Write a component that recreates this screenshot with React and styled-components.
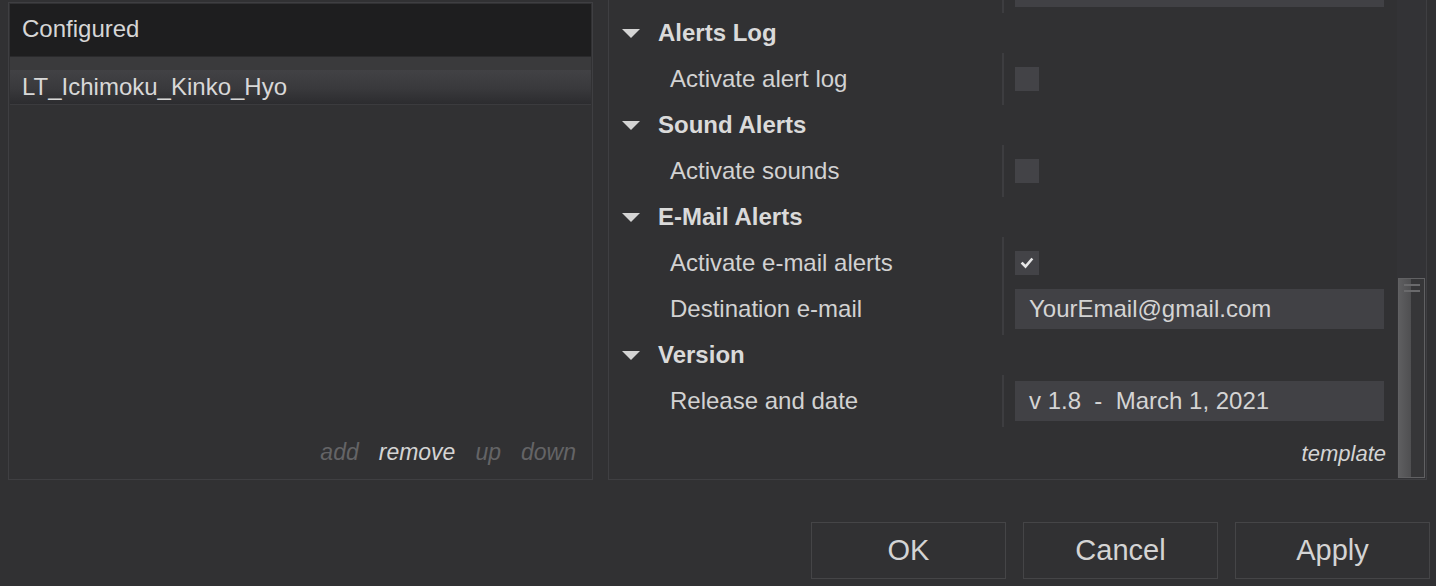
import React from 'react';
import styled, { createGlobalStyle } from 'styled-components';

const GlobalStyle = createGlobalStyle`
  html, body {
    margin: 0;
    padding: 0;
    background: #313133;
    overflow: hidden;
  }
  body {
    font-family: "Liberation Sans", Arial, sans-serif;
    color: #d2d2d2;
  }
`;

const Dialog = styled.div`
  width: 1436px;
  height: 586px;
  display: flex;
  flex-direction: column;
  background: #313133;
`;

const PanelsRow = styled.div`
  display: flex;
  gap: 15px;
  padding: 0 9px 0 8px;
  height: 480px;
`;

const LeftPanel = styled.div`
  width: 581px;
  margin-top: 2px;
  border: 1px solid #3f3f42;
  padding: 1px;
  display: flex;
  flex-direction: column;
`;

const ListHeader = styled.div`
  height: 52px;
  background: #1e1e1f;
  display: flex;
  align-items: center;
  padding-left: 12px;
  padding-bottom: 2px;
  box-sizing: border-box;
  font-size: 24px;
  color: #d6d6d6;
`;

const ListGap = styled.div`
  height: 13px;
  background: #3a3a3c;
  border-top: 1px solid #2a2a2c;
`;

const ListItem = styled.div`
  height: 34px;
  display: flex;
  align-items: center;
  padding-left: 12px;
  font-size: 24px;
  color: ${(p) => (p.$selected ? '#d8d8d8' : '#bdbdbd')};
  background: ${(p) =>
    p.$selected ? 'linear-gradient(#424245, #39393c 55%, #2c2c2f)' : 'transparent'};
  border-bottom: 1px solid #3b3b3e;
`;

const ListBody = styled.div`
  flex: 1;
`;

const LinkBar = styled.div`
  height: 52px;
  display: flex;
  justify-content: flex-end;
  align-items: center;
  gap: 20px;
  padding-right: 15px;
  padding-bottom: 0;
`;

const Link = styled.span`
  font-size: 23px;
  font-style: italic;
  color: ${(p) => (p.$enabled ? '#d4d4d4' : '#646466')};
`;

const RightPanel = styled.div`
  flex: 1;
  border: 1px solid #3f3f42;
  border-top: none;
  display: flex;
  overflow: hidden;
`;

const Viewport = styled.div`
  flex: 1;
  overflow: hidden;
  display: flex;
  flex-direction: column;
`;

const Scrolled = styled.div`
  margin-top: -39px;
  display: flex;
  flex-direction: column;
`;

const SectionHeader = styled.div`
  height: 40px;
  display: flex;
  align-items: center;
  padding-left: 13px;
  gap: 18px;
  font-size: 24px;
  font-weight: bold;
  color: #dadada;
`;

const Caret = styled.span`
  width: 0;
  height: 0;
  border-left: 9px solid transparent;
  border-right: 9px solid transparent;
  border-top: 9px solid #d4d4d4;
`;

const Group = styled.div`
  padding: 3px 0;
  display: flex;
  flex-direction: column;
  background: linear-gradient(#3d3d40, #3d3d40) no-repeat 393px 0 / 2px 100%;
`;

const PropRow = styled.div`
  height: 46px;
  display: grid;
  grid-template-columns: 393px 2px 1fr;
  align-items: center;
`;

const PropLabel = styled.div`
  padding-left: 61px;
  font-size: 24px;
  color: #d2d2d2;
  white-space: nowrap;
`;

const PropValue = styled.div`
  grid-column: 3;
  padding-left: 11px;
  padding-right: 13px;
  display: flex;
  align-items: center;
`;

const TextInput = styled.div`
  height: 40px;
  flex: 1;
  background: #414145;
  display: flex;
  align-items: center;
  padding-left: 14px;
  font-size: 24px;
  color: #d4d4d4;
  white-space: pre;
`;

const CheckBox = styled.div`
  width: 24px;
  height: 24px;
  background: #434347;
  display: flex;
  align-items: center;
  justify-content: center;
`;

const TemplateRow = styled.div`
  height: 52px;
  display: flex;
  justify-content: flex-end;
  align-items: center;
  padding-right: 11px;
  padding-top: 2px;
  box-sizing: border-box;
  font-size: 22px;
  font-style: italic;
  color: #d4d4d4;
`;

const ScrollTrack = styled.div`
  width: 29px;
  background: #333336;
  display: flex;
  flex-direction: column;
  justify-content: flex-end;
`;

const ScrollThumb = styled.div`
  height: 198px;
  margin: 0 1px 1px 1px;
  border: 1px solid #616163;
  background: linear-gradient(90deg, #5e5e60, #4f4f51 48%, #363638 50%, #363638);
  position: relative;
`;

const Grip = styled.div`
  position: absolute;
  top: 5px;
  left: 5px;
  width: 16px;
  height: 8px;
  border-top: 2px solid #6a6a6c;
  border-bottom: 2px solid #6a6a6c;
  box-sizing: border-box;
`;

const ButtonBar = styled.div`
  flex: 1;
  display: flex;
  justify-content: flex-end;
  align-items: flex-start;
  gap: 17px;
  padding-top: 42px;
  padding-right: 6px;
`;

const Button = styled.button`
  width: 195px;
  height: 57px;
  background: #313133;
  border: 1px solid #454547;
  color: #d4d4d4;
  font-family: "Liberation Sans", Arial, sans-serif;
  font-size: 29px;
  padding: 0;
  cursor: pointer;
`;

const Check = () => (
  <svg width="14" height="14" viewBox="0 0 14 14">
    <path d="M2.5 7.5 L5.5 10.5 L11.5 3.5" fill="none" stroke="#e6e6e6" strokeWidth="2.6" strokeLinecap="square" />
  </svg>
);

const sections = [
  { title: 'Alerts Log', rows: [{ label: 'Activate alert log', type: 'check', value: false }] },
  { title: 'Sound Alerts', rows: [{ label: 'Activate sounds', type: 'check', value: false }] },
  {
    title: 'E-Mail Alerts',
    rows: [
      { label: 'Activate e-mail alerts', type: 'check', value: true },
      { label: 'Destination e-mail', type: 'text', value: 'YourEmail@gmail.com' },
    ],
  },
  { title: 'Version', rows: [{ label: 'Release and date', type: 'text', value: 'v 1.8  -  March 1, 2021' }] },
];

const Property = ({ row }) => (
  <PropRow>
    <PropLabel>{row.label}</PropLabel>
    <PropValue>
      {row.type === 'check' ? (
        <CheckBox>{row.value && <Check />}</CheckBox>
      ) : (
        <TextInput>{row.value}</TextInput>
      )}
    </PropValue>
  </PropRow>
);

const App = () => (
  <Dialog>
    <GlobalStyle />
    <PanelsRow>
      <LeftPanel>
        <ListHeader>Configured</ListHeader>
        <ListGap />
        <ListBody>
          <ListItem $selected>LT_Ichimoku_Kinko_Hyo</ListItem>
        </ListBody>
        <LinkBar>
          <Link>add</Link>
          <Link $enabled>remove</Link>
          <Link>up</Link>
          <Link>down</Link>
        </LinkBar>
      </LeftPanel>
      <RightPanel>
        <Viewport>
          <Scrolled>
            {/* row scrolled above the visible area */}
            <Group>
              <Property row={{ label: '', type: 'text', value: '' }} />
            </Group>
            {sections.map((s) => (
              <React.Fragment key={s.title}>
                <SectionHeader>
                  <Caret />
                  {s.title}
                </SectionHeader>
                <Group>
                  {s.rows.map((r) => (
                    <Property key={r.label} row={r} />
                  ))}
                </Group>
              </React.Fragment>
            ))}
            <TemplateRow>template</TemplateRow>
          </Scrolled>
        </Viewport>
        <ScrollTrack>
          <ScrollThumb>
            <Grip />
          </ScrollThumb>
        </ScrollTrack>
      </RightPanel>
    </PanelsRow>
    <ButtonBar>
      <Button>OK</Button>
      <Button>Cancel</Button>
      <Button>Apply</Button>
    </ButtonBar>
  </Dialog>
);

export default App;
